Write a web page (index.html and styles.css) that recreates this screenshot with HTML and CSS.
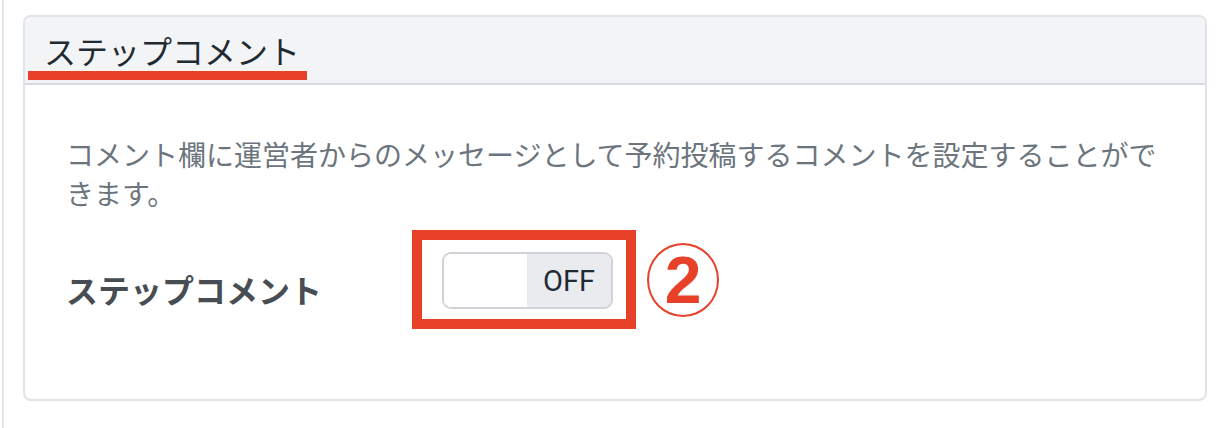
FILE: index.html
```html
<!DOCTYPE html>
<html lang="ja">
<head>
    <meta charset="UTF-8">
    <meta name="viewport" content="width=device-width, initial-scale=1.0">
    <title>ステップコメント</title>
    <link rel="stylesheet" href="styles.css">
</head>
<body>
    <div class="page">
        <div class="card">
            <div class="card-header">
                <h2 class="card-title">ステップコメント</h2>
            </div>
            <div class="card-body">
                <p class="note">コメント欄に運営者からのメッセージとして予約投稿するコメントを設定することができます。</p>
                <div class="form-row">
                    <label class="form-label" for="step-comment">ステップコメント</label>
                    <div class="mark-box">
                        <button class="toggle" id="step-comment" type="button">
                            <span class="toggle-knob"></span>
                            <span class="toggle-state">OFF</span>
                        </button>
                    </div>
                    <span class="step-num">2</span>
                </div>
            </div>
        </div>
    </div>
</body>
</html>
```

FILE: styles.css
```css
html, body { margin: 0; background: #fff; }
body { font-family: "Noto Sans CJK JP", "Noto Sans", sans-serif; color: #212529; }
.page { box-sizing: border-box; height: 428px; margin-left: 2px; border-left: 2px solid #e3e6ea; padding: 15px 25px 0 19px; }

.card { border: 2px solid #e0e3e7; border-radius: 8px; overflow: hidden; }
.card-header { background: #f3f4f6; border-bottom: 2px solid #d6d9dd; padding: 14px 0 3px 3px; }
.card-title { display: inline-block; margin: 0; font-size: 32px; font-weight: 400; line-height: 38px; color: #222a31; padding: 0 7px 2px 16px; border-bottom: 9px solid #e8412a; }

.card-body { padding: 50px 41px 70px 41px; }
.note { margin: 0; font-size: 28px; line-height: 39px; color: #6c757d; }

.form-row { display: flex; align-items: center; margin-top: 17px; }
.form-label { width: 346px; flex-shrink: 0; padding-top: 18px; font-size: 32px; font-weight: 700; line-height: 44px; color: #474d53; }

.mark-box { border: 10px solid #e8412a; padding: 12px 13px 10px 20px; }
.toggle { display: flex; width: 171px; height: 57px; padding: 0; border: 2px solid #cfd3d8; border-radius: 9px; background: #fff; overflow: hidden; cursor: pointer; }
.toggle-knob { width: 83px; height: 100%; background: #fff; }
.toggle-state { flex: 1; display: flex; align-items: center; justify-content: center; background: #e9ebee; font-family: Roboto, "Liberation Sans", sans-serif; font-size: 29px; color: #1f2a35; }

.step-num { box-sizing: border-box; width: 72px; height: 74px; margin-left: 11px; border: 2.5px solid #e8412a; border-radius: 50%; display: flex; align-items: center; justify-content: center; font-family: "Liberation Sans", sans-serif; font-size: 66px; font-weight: 700; line-height: 1; color: #e8412a; }
```
